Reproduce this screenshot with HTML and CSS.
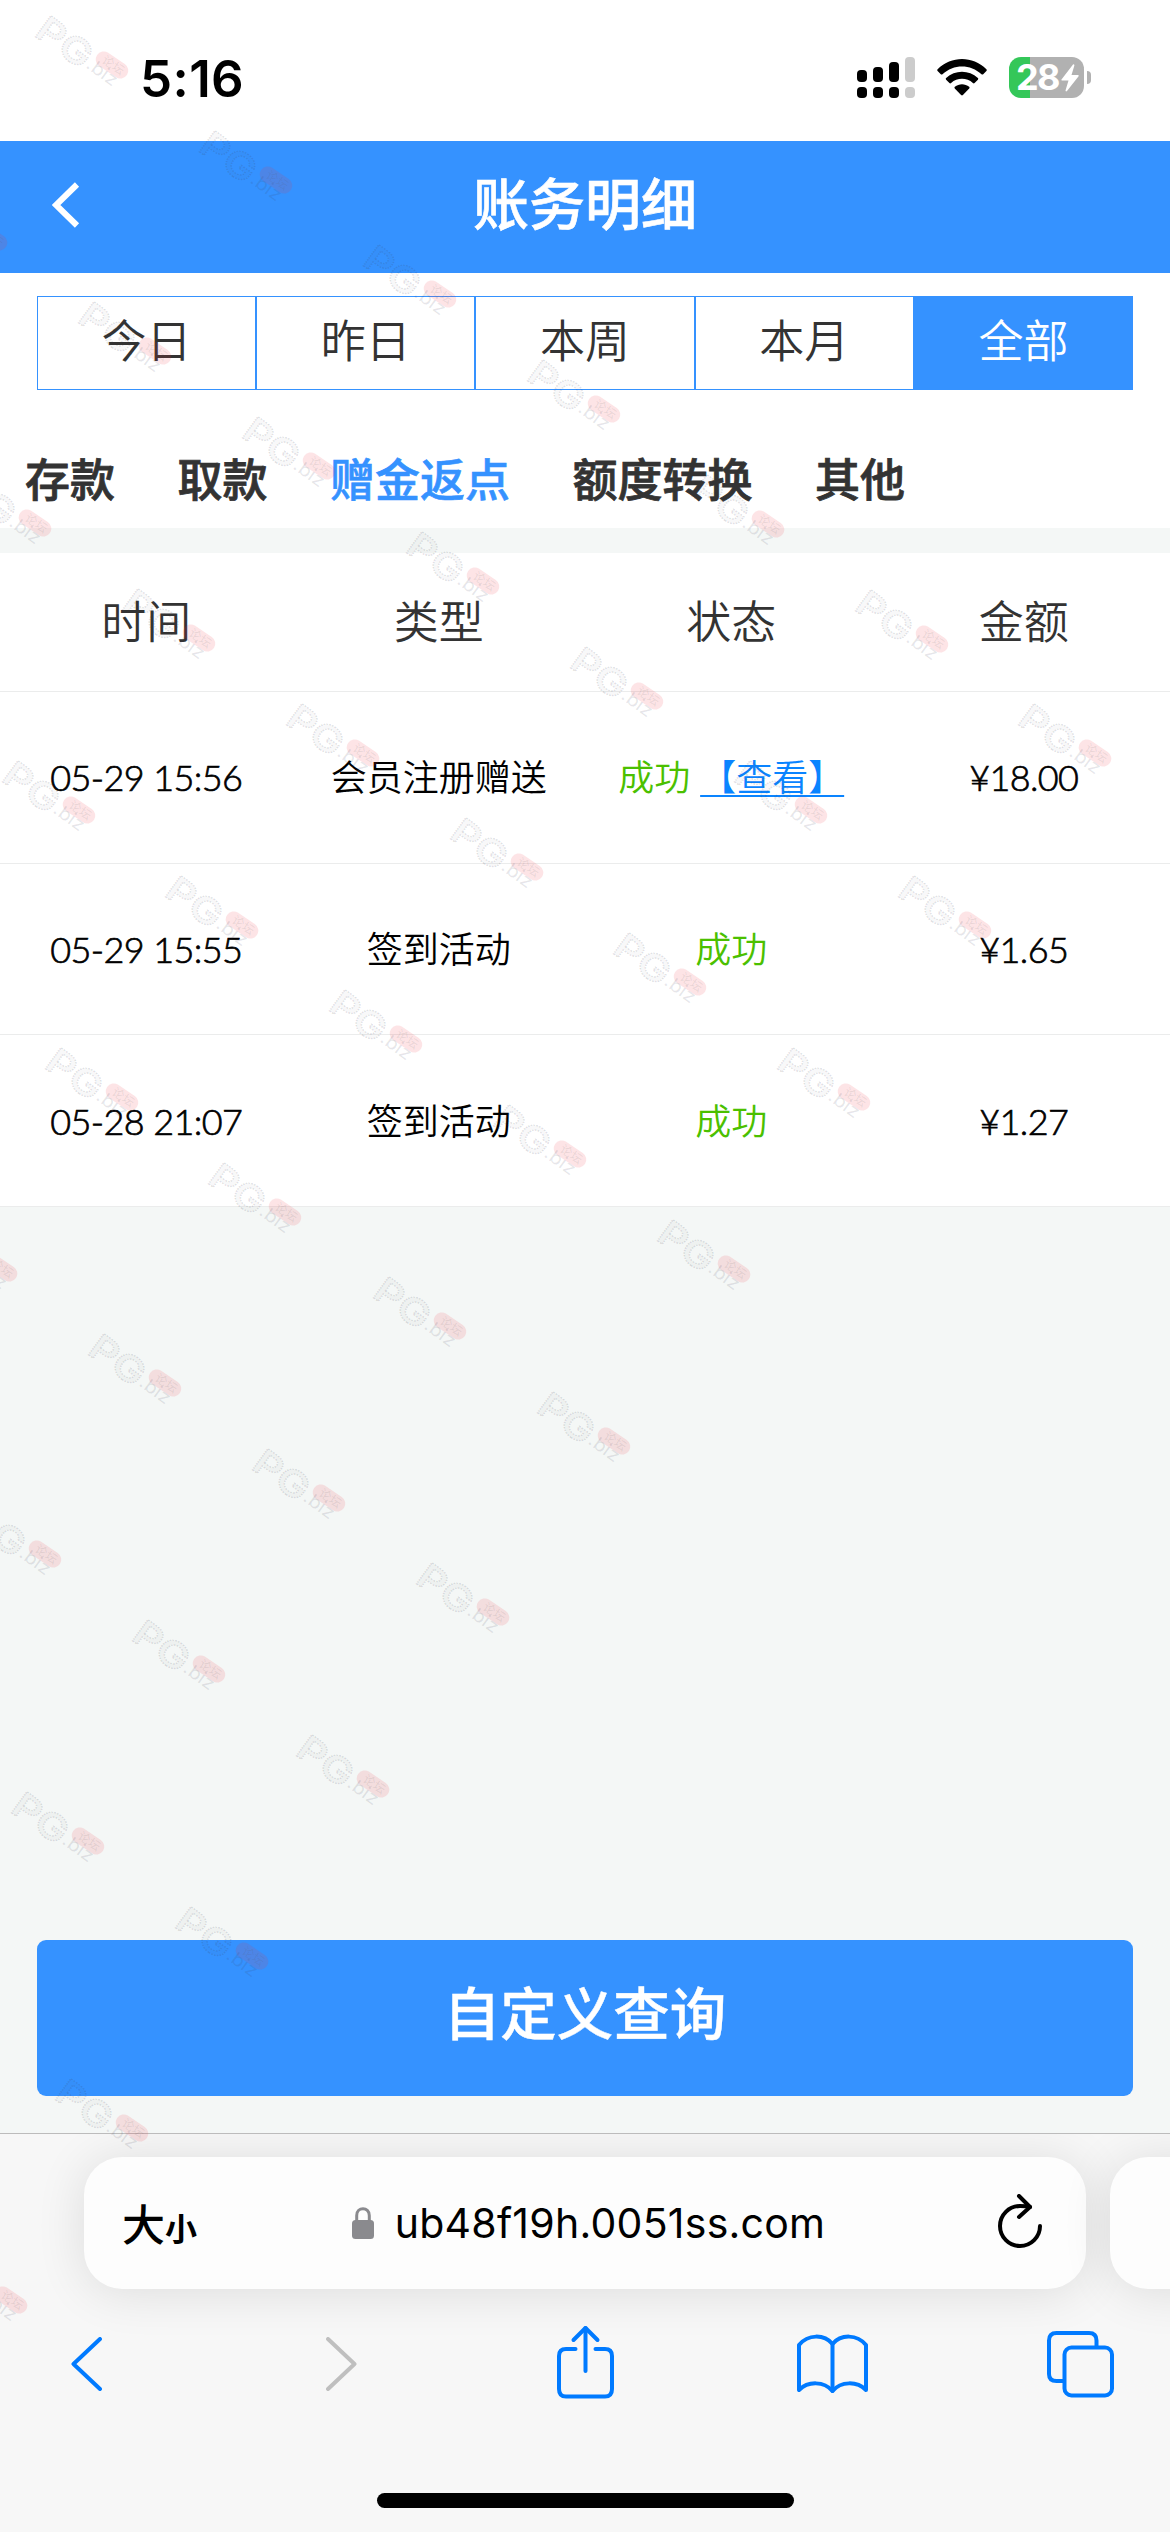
FILE: index.html
```html
<!DOCTYPE html>
<html lang="zh-CN">
<head>
  <meta charset="UTF-8">
  <title>账务明细</title>
  <link rel="stylesheet" href="styles.css">
</head>
<body>
  <div class="status-bar">
    <div class="clock">5:16</div>
    <div class="status-icons">
      <svg class="signal" width="58" height="41" viewBox="0 0 58 41">
        <rect x="0" y="13" width="10" height="12" rx="4"/>
        <rect x="16" y="10" width="10" height="15" rx="4"/>
        <rect x="32" y="5" width="10" height="20" rx="4"/>
        <rect class="off" x="48" y="0" width="10" height="25" rx="4"/>
        <rect x="0" y="30" width="10" height="11" rx="4"/>
        <rect x="16" y="30" width="10" height="11" rx="4"/>
        <rect x="32" y="30" width="10" height="11" rx="4"/>
        <rect class="off" x="48" y="30" width="10" height="11" rx="4"/>
      </svg>
      <svg class="wifi" width="50" height="37" viewBox="0 0 50 37">
        <path d="M0.6 10.2 C14.5 -3.4 35.5 -3.4 49.4 10.2 Q50.2 11 49.4 11.9 L46.2 15.2 Q45.4 16 44.5 15.2 C33.5 4.8 16.5 4.8 5.5 15.2 Q4.6 16 3.8 15.2 L0.6 11.9 Q-0.2 11 0.6 10.2 Z"/>
        <path d="M9.1 19 C18 10.6 32 10.6 40.9 19 Q41.7 19.9 40.9 20.7 L37.6 24 Q36.8 24.8 35.9 24 C29.8 18.4 20.2 18.4 14.1 24 Q13.2 24.8 12.4 24 L9.1 20.7 Q8.3 19.9 9.1 19 Z"/>
        <path d="M17.8 27.8 C22 24.3 28 24.3 32.2 27.8 Q33 28.6 32.2 29.5 L25.9 36 Q25 36.9 24.1 36 L17.8 29.5 Q17 28.6 17.8 27.8 Z"/>
      </svg>
      <div class="battery">
        <div class="battery-body">
          <span class="battery-level">28</span>
          <svg width="18" height="28" viewBox="0 0 18 28">
            <path d="M12 0.5 L0.5 15.5 Q0 16.5 1 16.5 L7.5 16.5 L4.5 26.5 Q4.8 28 6 27 L17.6 12.2 Q18 11 17 11 L10.5 11 L13.4 1.4 Q13.2 -0.3 12 0.5 Z"/>
          </svg>
        </div>
        <div class="battery-cap"></div>
      </div>
    </div>
  </div>

  <header class="nav">
    <svg class="nav-back" width="28" height="46" viewBox="0 0 28 46">
      <path d="M25 2.5 L4 23 L25 43.5"/>
    </svg>
    <h1>账务明细</h1>
  </header>

  <div class="dates">
    <div class="date">今日</div>
    <div class="date">昨日</div>
    <div class="date">本周</div>
    <div class="date">本月</div>
    <div class="date active">全部</div>
  </div>

  <div class="types">
    <div class="type">存款</div>
    <div class="type">取款</div>
    <div class="type active">赠金返点</div>
    <div class="type">额度转换</div>
    <div class="type">其他</div>
  </div>

  <div class="records">
    <div class="row head">
      <div>时间</div>
      <div>类型</div>
      <div>状态</div>
      <div>金额</div>
    </div>
    <div class="row">
      <div class="num">05-29 15:56</div>
      <div>会员注册赠送</div>
      <div><span class="success">成功</span> <a class="view" href="#">【查看】</a></div>
      <div class="num">¥18.00</div>
    </div>
    <div class="row">
      <div class="num">05-29 15:55</div>
      <div>签到活动</div>
      <div><span class="success">成功</span></div>
      <div class="num">¥1.65</div>
    </div>
    <div class="row">
      <div class="num">05-28 21:07</div>
      <div>签到活动</div>
      <div><span class="success">成功</span></div>
      <div class="num">¥1.27</div>
    </div>
  </div>

  <div class="action">
    <div class="query-btn">自定义查询</div>
  </div>

  <div class="browser">
    <div class="address-row">
      <div class="address">
        <div class="text-size"><span class="big">大</span><span class="small">小</span></div>
        <div class="url">
          <svg width="22" height="32" viewBox="0 0 22 32">
            <path class="shackle" d="M4.7 15 V8.5 C4.7 -0.6 17.3 -0.6 17.3 8.5 V15"/>
            <rect x="0" y="13" width="22" height="19" rx="3.5"/>
          </svg>
          <span>ub48f19h.0051ss.com</span>
        </div>
        <svg class="reload" width="44" height="54" viewBox="0 0 44 54">
          <path d="M42 32 A20 20 0 1 1 22 12 C26 12 29 12 32 13"/>
          <path d="M21 2 L32 13 L21 23"/>
        </svg>
      </div>
      <div class="address next"></div>
    </div>
    <div class="toolbar">
      <div class="tool back">
        <svg width="31" height="54" viewBox="0 0 31 54">
          <path d="M29 2 L2.5 27 L29 52"/>
        </svg>
      </div>
      <div class="tool forward">
        <svg width="31" height="54" viewBox="0 0 31 54">
          <path d="M2 2 L28.5 27 L2 52"/>
        </svg>
      </div>
      <div class="tool share">
        <svg width="57" height="74" viewBox="0 0 57 74">
          <path d="M18.5 24 H9 Q2 24 2 31 V64 Q2 71.5 9 71.5 H48 Q55 71.5 55 64 V31 Q55 24 48 24 H38.5"/>
          <path d="M28.5 46 V3"/>
          <path d="M16.5 15 L28.5 3 L40.5 15"/>
        </svg>
      </div>
      <div class="tool">
        <svg width="71" height="60" viewBox="0 0 71 60">
          <path d="M2 11 C11 0 27 0 35.5 10 C44 0 60 0 69 11 V56 C60 47 44 47 35.5 57 C27 47 11 47 2 56 Z"/>
          <path d="M35.5 10 V57"/>
        </svg>
      </div>
      <div class="tool">
        <svg width="67" height="67" viewBox="0 0 67 67">
          <path d="M16 50 H9.5 Q2 50 2 43 V9.5 Q2 2 9.5 2 H42 Q49.5 2 49.5 9.5 V15"/>
          <rect x="17.5" y="16.5" width="47.5" height="48" rx="7"/>
        </svg>
      </div>
    </div>
    <div class="home-bar"></div>
  </div>

  <!-- watermark layer -->
  <svg class="watermark" width="1170" height="2532" viewBox="0 0 1170 2532">
    <defs>
      <g id="mark">
        <text class="wm-logo" transform="translate(0 21) rotate(36)" textLength="60" lengthAdjust="spacingAndGlyphs">PG</text>
        <rect class="wm-pill" x="-18" y="-8" width="36" height="16" rx="8" transform="translate(79 51) rotate(34)"/>
        <text class="wm-pill-text" transform="translate(68 48) rotate(34)">论坛</text>
        <text class="wm-biz" transform="translate(52 53) rotate(36)" textLength="34" lengthAdjust="spacingAndGlyphs">.biz</text>
      </g>
    </defs>
    <use href="#mark" x="33" y="14"/>
    <use href="#mark" x="197" y="129"/>
    <use href="#mark" x="361" y="243"/>
    <use href="#mark" x="525" y="358"/>
    <use href="#mark" x="689" y="473"/>
    <use href="#mark" x="853" y="588"/>
    <use href="#mark" x="1016" y="702"/>

    <use href="#mark" x="-88" y="186"/>
    <use href="#mark" x="76" y="300"/>
    <use href="#mark" x="240" y="415"/>
    <use href="#mark" x="404" y="530"/>
    <use href="#mark" x="568" y="645"/>
    <use href="#mark" x="732" y="759"/>
    <use href="#mark" x="896" y="874"/>

    <use href="#mark" x="-44" y="472"/>
    <use href="#mark" x="120" y="587"/>
    <use href="#mark" x="284" y="702"/>
    <use href="#mark" x="448" y="816"/>
    <use href="#mark" x="611" y="931"/>
    <use href="#mark" x="775" y="1046"/>

    <use href="#mark" x="0" y="759"/>
    <use href="#mark" x="163" y="874"/>
    <use href="#mark" x="327" y="988"/>
    <use href="#mark" x="491" y="1103"/>
    <use href="#mark" x="655" y="1218"/>

    <use href="#mark" x="43" y="1046"/>
    <use href="#mark" x="206" y="1161"/>
    <use href="#mark" x="371" y="1275"/>
    <use href="#mark" x="535" y="1390"/>

    <use href="#mark" x="-78" y="1217"/>
    <use href="#mark" x="86" y="1332"/>
    <use href="#mark" x="250" y="1447"/>
    <use href="#mark" x="414" y="1561"/>

    <use href="#mark" x="-34" y="1503"/>
    <use href="#mark" x="130" y="1618"/>
    <use href="#mark" x="294" y="1733"/>

    <use href="#mark" x="9" y="1790"/>
    <use href="#mark" x="173" y="1905"/>
    <use href="#mark" x="53" y="2077"/>
    <use href="#mark" x="-68" y="2249"/>
  </svg>
</body>
</html>
```
FILE: styles.css
```css
* {
  box-sizing: border-box;
}
body {
  position: relative;
  display: flex;
  flex-direction: column;
  width: 1170px;
  height: 2532px;
  margin: 0;
  overflow: hidden;
  background: #f4f7f6;
  color: #333;
  font-family: Lato, 'Noto Sans CJK SC', sans-serif;
}
svg {
  display: block;
  flex: none;
}

/* Status bar */
.status-bar {
  display: flex;
  justify-content: space-between;
  height: 141px;
  padding: 57px 79px 0 140px;
  background: #fff;
}
.clock {
  height: 43px;
  line-height: 43px;
  font-family: Inter, sans-serif;
  font-size: 51px;
  font-weight: 600;
  letter-spacing: 0.4px;
  color: #000;
}
.status-icons {
  display: flex;
  align-items: flex-start;
}
.signal .off {
  fill: #ccc;
}
.wifi {
  margin: 2px 22px 0;
}
.battery {
  display: flex;
  align-items: center;
  gap: 3px;
}
.battery-body {
  display: flex;
  align-items: center;
  justify-content: center;
  gap: 2px;
  width: 75px;
  height: 41px;
  padding-left: 2px;
  border-radius: 12px;
  background: linear-gradient(to right, #34c759 21px, #b1b1b1 21px);
}
.battery-body svg {
  fill: #fff;
}
.battery-level {
  font-family: Inter, sans-serif;
  font-size: 36px;
  font-weight: 700;
  letter-spacing: -1.5px;
  line-height: 41px;
  color: #fff;
}
.battery-cap {
  width: 4px;
  height: 13px;
  border-radius: 0 4px 4px 0;
  background: #b1b1b1;
}

/* Header */
.nav {
  display: grid;
  grid-template-columns: 200px 1fr 200px;
  align-items: center;
  height: 132px;
  background: #3592ff;
}
.nav-back {
  margin: -5px 0 0 52px;
  fill: none;
  stroke: #fff;
  stroke-width: 6;
}
.nav h1 {
  margin: -6px 0 0;
  font-size: 56px;
  font-weight: 500;
  line-height: 80px;
  text-align: center;
  color: #fff;
  -webkit-text-stroke: 0.6px #fff;
}

/* Date range */
.dates {
  display: flex;
  height: 141px;
  padding: 23px 37px 24px;
  background: #fff;
}
.date {
  flex: 1;
  border: 1px solid #3592ff;
  font-size: 45px;
  font-weight: 350;
  line-height: 88px;
  text-align: center;
}
.date.active {
  background: #3592ff;
  color: #fff;
}

/* Record types */
.types {
  display: flex;
  gap: 62.5px;
  height: 114px;
  padding: 36px 25px 0;
  background: #fff;
  font-size: 45px;
  font-weight: 500;
  line-height: 60px;
  -webkit-text-stroke: 0.8px #333;
}
.type.active {
  color: #3592ff;
  -webkit-text-stroke: 0.6px #3592ff;
}

/* Records */
.records {
  margin-top: 25px;
  background: #fff;
}
.row {
  display: grid;
  grid-template-columns: repeat(4, 1fr);
  align-items: center;
  height: 171.7px;
  border-bottom: 1px solid #ebecec;
  font-size: 36px;
  font-weight: 350;
  line-height: 52px;
  text-align: center;
  white-space: nowrap;
  color: #000;
}
.row.head {
  height: 139px;
  font-size: 45px;
  color: #333;
}
.num {
  font-weight: 300;
  letter-spacing: -0.6px;
  -webkit-text-stroke: 0.7px #000;
}
.success {
  color: #4bc000;
}
.view {
  color: #0a84ff;
  text-decoration: underline;
  text-decoration-thickness: 2px;
  text-decoration-skip-ink: none;
  text-underline-offset: 4px;
}

.action {
  margin-top: auto;
  padding: 0 37px 37px;
}
.query-btn {
  height: 156px;
  border-radius: 9px;
  background: #3592ff;
  font-size: 56.5px;
  font-weight: 500;
  line-height: 147px;
  text-align: center;
  color: #fff;
  -webkit-text-stroke: 0.4px #fff;
}

/* Browser toolbar */
.browser {
  display: flex;
  flex-direction: column;
  height: 399px;
  overflow: hidden;
  border-top: 1px solid #bcbcbc;
  background: #f7f7f7;
}
.address-row {
  display: flex;
  gap: 24px;
  height: 132px;
  margin: 23px 0 0 84px;
}
.address {
  display: flex;
  flex: none;
  align-items: center;
  justify-content: space-between;
  width: 1002px;
  height: 132px;
  padding: 0 44px 0 38px;
  border-radius: 38px;
  background: #fdfdfd;
  box-shadow: 0 3px 50px rgba(0, 0, 0, 0.11);
}
.text-size {
  display: flex;
  align-items: baseline;
  margin-top: -2px;
  color: #000;
  font-family: 'Noto Sans CJK SC', sans-serif;
  font-weight: 500;
}
.text-size .big {
  font-size: 43px;
}
.text-size .small {
  font-size: 32px;
  font-weight: 700;
}
.url {
  display: flex;
  align-items: center;
  gap: 21px;
  margin-right: 18px;
  font-family: Inter, sans-serif;
  font-size: 41px;
  letter-spacing: 0.25px;
  color: #000;
}
.url svg {
  fill: #8a8a8e;
}
.url .shackle {
  fill: none;
  stroke: #8a8a8e;
  stroke-width: 3;
}
.reload {
  margin-top: -5px;
  fill: none;
  stroke: #000;
  stroke-width: 4;
  stroke-linecap: round;
  stroke-linejoin: round;
}
.toolbar {
  display: flex;
  align-items: center;
  justify-content: space-between;
  height: 80px;
  margin-top: 35px;
  padding: 0 56px;
}
.tool {
  display: flex;
  justify-content: center;
  width: 67px;
}
.tool.back {
  padding-right: 6px;
}
.tool.forward {
  padding-left: 9px;
}
.tool.share {
  padding-bottom: 4px;
}
.tool svg {
  fill: none;
  stroke: #007aff;
  stroke-width: 4;
  stroke-linecap: round;
  stroke-linejoin: round;
}
.tool.forward svg {
  stroke: #bfbfbf;
}
.home-bar {
  width: 417px;
  height: 15px;
  margin: 89px auto 0;
  border-radius: 8px;
  background: #000;
}

/* Watermark */
.watermark {
  position: absolute;
  top: 0;
  left: 0;
  pointer-events: none;
}
.wm-logo {
  font-family: Inter, sans-serif;
  font-size: 36px;
  font-weight: 600;
  fill: rgba(60, 60, 80, 0.03);
  stroke: rgba(60, 60, 80, 0.16);
  stroke-width: 1.4;
  stroke-dasharray: 1.5 1;
}
.wm-pill {
  fill: rgba(240, 50, 60, 0.13);
}
.wm-pill-text {
  font-family: 'Noto Sans CJK SC', sans-serif;
  font-size: 12px;
  fill: rgba(90, 90, 90, 0.12);
}
.wm-biz {
  font-family: Inter, sans-serif;
  font-size: 18px;
  fill: rgba(60, 60, 80, 0.12);
}
```
